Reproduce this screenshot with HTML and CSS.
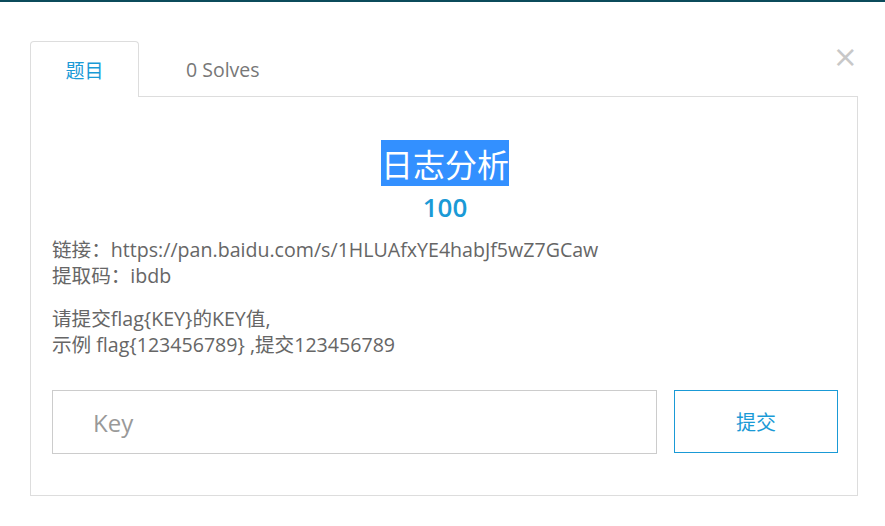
FILE: index.html
```html
<!DOCTYPE html>
<html lang="zh-CN">
<head>
  <meta charset="UTF-8">
  <title>日志分析</title>
  <link rel="stylesheet" href="styles.css">
</head>
<body>
  <div class="topline"></div>
  <div class="modal">
    <span class="close">&times;</span>
    <ul class="tabs">
      <li class="tab active">题目</li>
      <li class="tab">0 Solves</li>
    </ul>
    <div class="panel">
      <h1 class="title"><span class="sel">日志分析</span></h1>
      <div class="score">100</div>
      <p class="desc">链接：https://pan.baidu.com/s/1HLUAfxYE4habJf5wZ7GCaw<br>提取码：ibdb</p>
      <p class="desc">请提交flag{KEY}的KEY值,<br>示例 flag{123456789} ,提交123456789</p>
      <form class="answer">
        <input class="key" type="text" placeholder="Key">
        <button class="submit" type="button">提交</button>
      </form>
    </div>
  </div>
</body>
</html>
```

FILE: styles.css
```css
* {
  margin: 0;
  padding: 0;
  box-sizing: border-box;
}
body {
  background: #fff;
  font-family: "Open Sans", "Noto Sans CJK SC", sans-serif;
  color: #666;
}
.topline {
  height: 2px;
  background: #0b4b5b;
}
.modal {
  position: relative;
  padding: 39px 27px 0 30px;
}
.close {
  position: absolute;
  top: 40px;
  right: 27px;
  font-size: 30px;
  line-height: 30px;
  color: #c8c8c8;
  font-family: "DejaVu Sans", sans-serif;
}
.tabs {
  list-style: none;
  display: flex;
  height: 55px;
}
.tab {
  font-size: 19.5px;
  line-height: 58px;
  color: #777;
  padding-left: 47px;
}
.tab.active {
  width: 109px;
  height: 56px;
  padding: 0;
  font-size: 19px;
  text-align: center;
  color: #1a9ad6;
  border: 1px solid #ddd;
  border-bottom: none;
  border-radius: 4px 4px 0 0;
  background: #fff;
  position: relative;
  z-index: 1;
}
.panel {
  border: 1px solid #ddd;
  height: 400px;
  padding: 44px 19px 0 21px;
}
.title {
  text-align: center;
  font-size: 32px;
  font-weight: normal;
  line-height: 44px;
}
.sel {
  background: #3390ff;
  color: #fff;
  font-family: "Noto Sans CJK SC", sans-serif;
}
.score {
  text-align: center;
  font-size: 26px;
  font-weight: 600;
  color: #1a9ad6;
  line-height: 36px;
  margin-top: 2px;
  margin-bottom: 12px;
}
.desc {
  font-size: 19.6px;
  line-height: 26px;
  margin-bottom: 17px;
}
.answer {
  display: flex;
  gap: 17px;
  margin-top: 32px;
}
.key {
  width: 605px;
  height: 64px;
  border: 1px solid #ccc;
  padding-left: 40px;
  font-size: 24px;
  font-family: "Open Sans", sans-serif;
  color: #555;
  outline: none;
}
.key::placeholder {
  color: #999;
}
.submit {
  width: 164px;
  height: 63px;
  border: 1px solid #1a9ad6;
  background: #fff;
  color: #1a9ad6;
  font-size: 20px;
  font-family: "Noto Sans CJK SC", sans-serif;
}
```
